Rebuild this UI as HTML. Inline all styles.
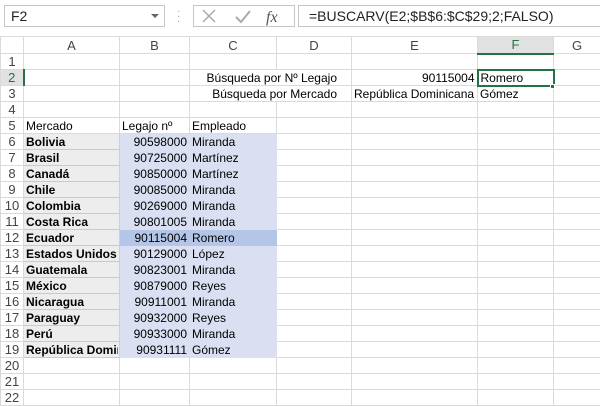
<!DOCTYPE html>
<html><head><meta charset="utf-8"><style>
*{margin:0;padding:0;box-sizing:border-box}
body{width:600px;height:401px;overflow:hidden;background:#fff;font-family:"Liberation Sans",Arial,sans-serif;position:relative;color:#000}
.abs{position:absolute}
table{position:absolute;left:0;top:36px;width:600px;border-collapse:collapse;table-layout:fixed;font-size:12px}
td{height:16px;border:1px solid #dadada;padding:0 2px;white-space:nowrap;overflow:hidden;line-height:14px}
tr.h td{height:17px;line-height:15px;background:#fff;color:#444;text-align:center;border-color:#dadada;font-size:13px}
td.rh{color:#444;text-align:center;font-size:13px;padding:0}
td.a{background:#ededed;font-weight:bold;border-color:#dadada #d0d0d0 #b9cde8 #dadada}
td.b{background:#dae0f2;border-color:#dae0f2;text-align:right}
td.c{background:#dae0f2;border-color:#dae0f2}
td.hl{background:#b4c6e7;border-color:#b4c6e7}
.r{text-align:right}
.clip{width:92px;overflow:hidden;white-space:nowrap}
</style></head><body>
<div class="abs" style="left:4px;top:5px;width:161px;height:22px;border:1px solid #c6c6c6;font-size:14px;padding:2px 6px;color:#222">F2</div>
<div class="abs" style="left:151px;top:14px;width:0;height:0;border-left:4px solid transparent;border-right:4px solid transparent;border-top:4px solid #666"></div>
<div class="abs" style="left:177px;top:9px;color:#999;font-size:10px;line-height:5px">·<br>·<br>·</div>
<div class="abs" style="left:193px;top:5px;width:102px;height:22px;border:1px solid #c6c6c6"></div>
<svg class="abs" style="left:193px;top:5px" width="102" height="22"><path d="M10 5 L22 17 M22 5 L10 17" stroke="#aaa" stroke-width="1.5" fill="none"/><path d="M43 12 L48 17 L57 6" stroke="#aaa" stroke-width="2" fill="none"/><text x="73" y="17" font-family="Liberation Serif" font-style="italic" font-size="16" fill="#555">fx</text></svg>
<div class="abs" style="left:298px;top:5px;width:302px;height:22px;border:1px solid #c6c6c6;border-right:none;font-size:14px;padding:2px 10px;color:#222">=BUSCARV(E2;$B$6:$C$29;2;FALSO)</div>
<table>
<colgroup><col style="width:23px"><col style="width:96px"><col style="width:70px"><col style="width:87px"><col style="width:75px"><col style="width:126px"><col style="width:76px"><col style="width:47px"></colgroup>
<tr class="h"><td></td><td>A</td><td>B</td><td>C</td><td>D</td><td>E</td><td style="background:#e1e1e1;color:#217346;border-bottom:2px solid #217346">F</td><td>G</td></tr>
<tr><td class="rh">1</td><td></td><td></td><td></td><td></td><td></td><td></td><td></td></tr>
<tr><td class="rh" style="color:#217346;background:#e1e1e1;border-right:2px solid #217346">2</td><td></td><td></td><td colspan="2" class="r" style="padding-right:14px">Búsqueda por Nº Legajo</td><td class="r">90115004</td><td style="border:2px solid #217346">Romero</td><td></td></tr>
<tr><td class="rh">3</td><td></td><td></td><td colspan="2" class="r" style="padding-right:14px">Búsqueda por Mercado</td><td>República Dominicana</td><td>Gómez</td><td></td></tr>
<tr><td class="rh">4</td><td></td><td></td><td></td><td></td><td></td><td></td><td></td></tr>
<tr><td class="rh">5</td><td>Mercado</td><td>Legajo nº</td><td>Empleado</td><td></td><td></td><td></td><td></td></tr>
<tr><td class="rh">6</td><td class="a">Bolivia</td><td class="b">90598000</td><td class="c">Miranda</td><td></td><td></td><td></td><td></td></tr>
<tr><td class="rh">7</td><td class="a">Brasil</td><td class="b">90725000</td><td class="c">Martínez</td><td></td><td></td><td></td><td></td></tr>
<tr><td class="rh">8</td><td class="a">Canadá</td><td class="b">90850000</td><td class="c">Martínez</td><td></td><td></td><td></td><td></td></tr>
<tr><td class="rh">9</td><td class="a">Chile</td><td class="b">90085000</td><td class="c">Miranda</td><td></td><td></td><td></td><td></td></tr>
<tr><td class="rh">10</td><td class="a">Colombia</td><td class="b">90269000</td><td class="c">Miranda</td><td></td><td></td><td></td><td></td></tr>
<tr><td class="rh">11</td><td class="a">Costa Rica</td><td class="b">90801005</td><td class="c">Miranda</td><td></td><td></td><td></td><td></td></tr>
<tr><td class="rh">12</td><td class="a">Ecuador</td><td class="b hl">90115004</td><td class="c hl">Romero</td><td></td><td></td><td></td><td></td></tr>
<tr><td class="rh">13</td><td class="a">Estados Unidos</td><td class="b">90129000</td><td class="c">López</td><td></td><td></td><td></td><td></td></tr>
<tr><td class="rh">14</td><td class="a">Guatemala</td><td class="b">90823001</td><td class="c">Miranda</td><td></td><td></td><td></td><td></td></tr>
<tr><td class="rh">15</td><td class="a">México</td><td class="b">90879000</td><td class="c">Reyes</td><td></td><td></td><td></td><td></td></tr>
<tr><td class="rh">16</td><td class="a">Nicaragua</td><td class="b">90911001</td><td class="c">Miranda</td><td></td><td></td><td></td><td></td></tr>
<tr><td class="rh">17</td><td class="a">Paraguay</td><td class="b">90932000</td><td class="c">Reyes</td><td></td><td></td><td></td><td></td></tr>
<tr><td class="rh">18</td><td class="a">Perú</td><td class="b">90933000</td><td class="c">Miranda</td><td></td><td></td><td></td><td></td></tr>
<tr><td class="rh">19</td><td class="a"><div class="clip">República Dominicana</div></td><td class="b">90931111</td><td class="c">Gómez</td><td></td><td></td><td></td><td></td></tr>
<tr><td class="rh">20</td><td></td><td></td><td></td><td></td><td></td><td></td><td></td></tr>
<tr><td class="rh">21</td><td></td><td></td><td></td><td></td><td></td><td></td><td></td></tr>
<tr><td class="rh">22</td><td></td><td></td><td></td><td></td><td></td><td></td><td></td></tr>
</table>
<div class="abs" style="left:550px;top:84px;width:5px;height:5px;background:#217346;border:1px solid #fff"></div>
</body></html>
